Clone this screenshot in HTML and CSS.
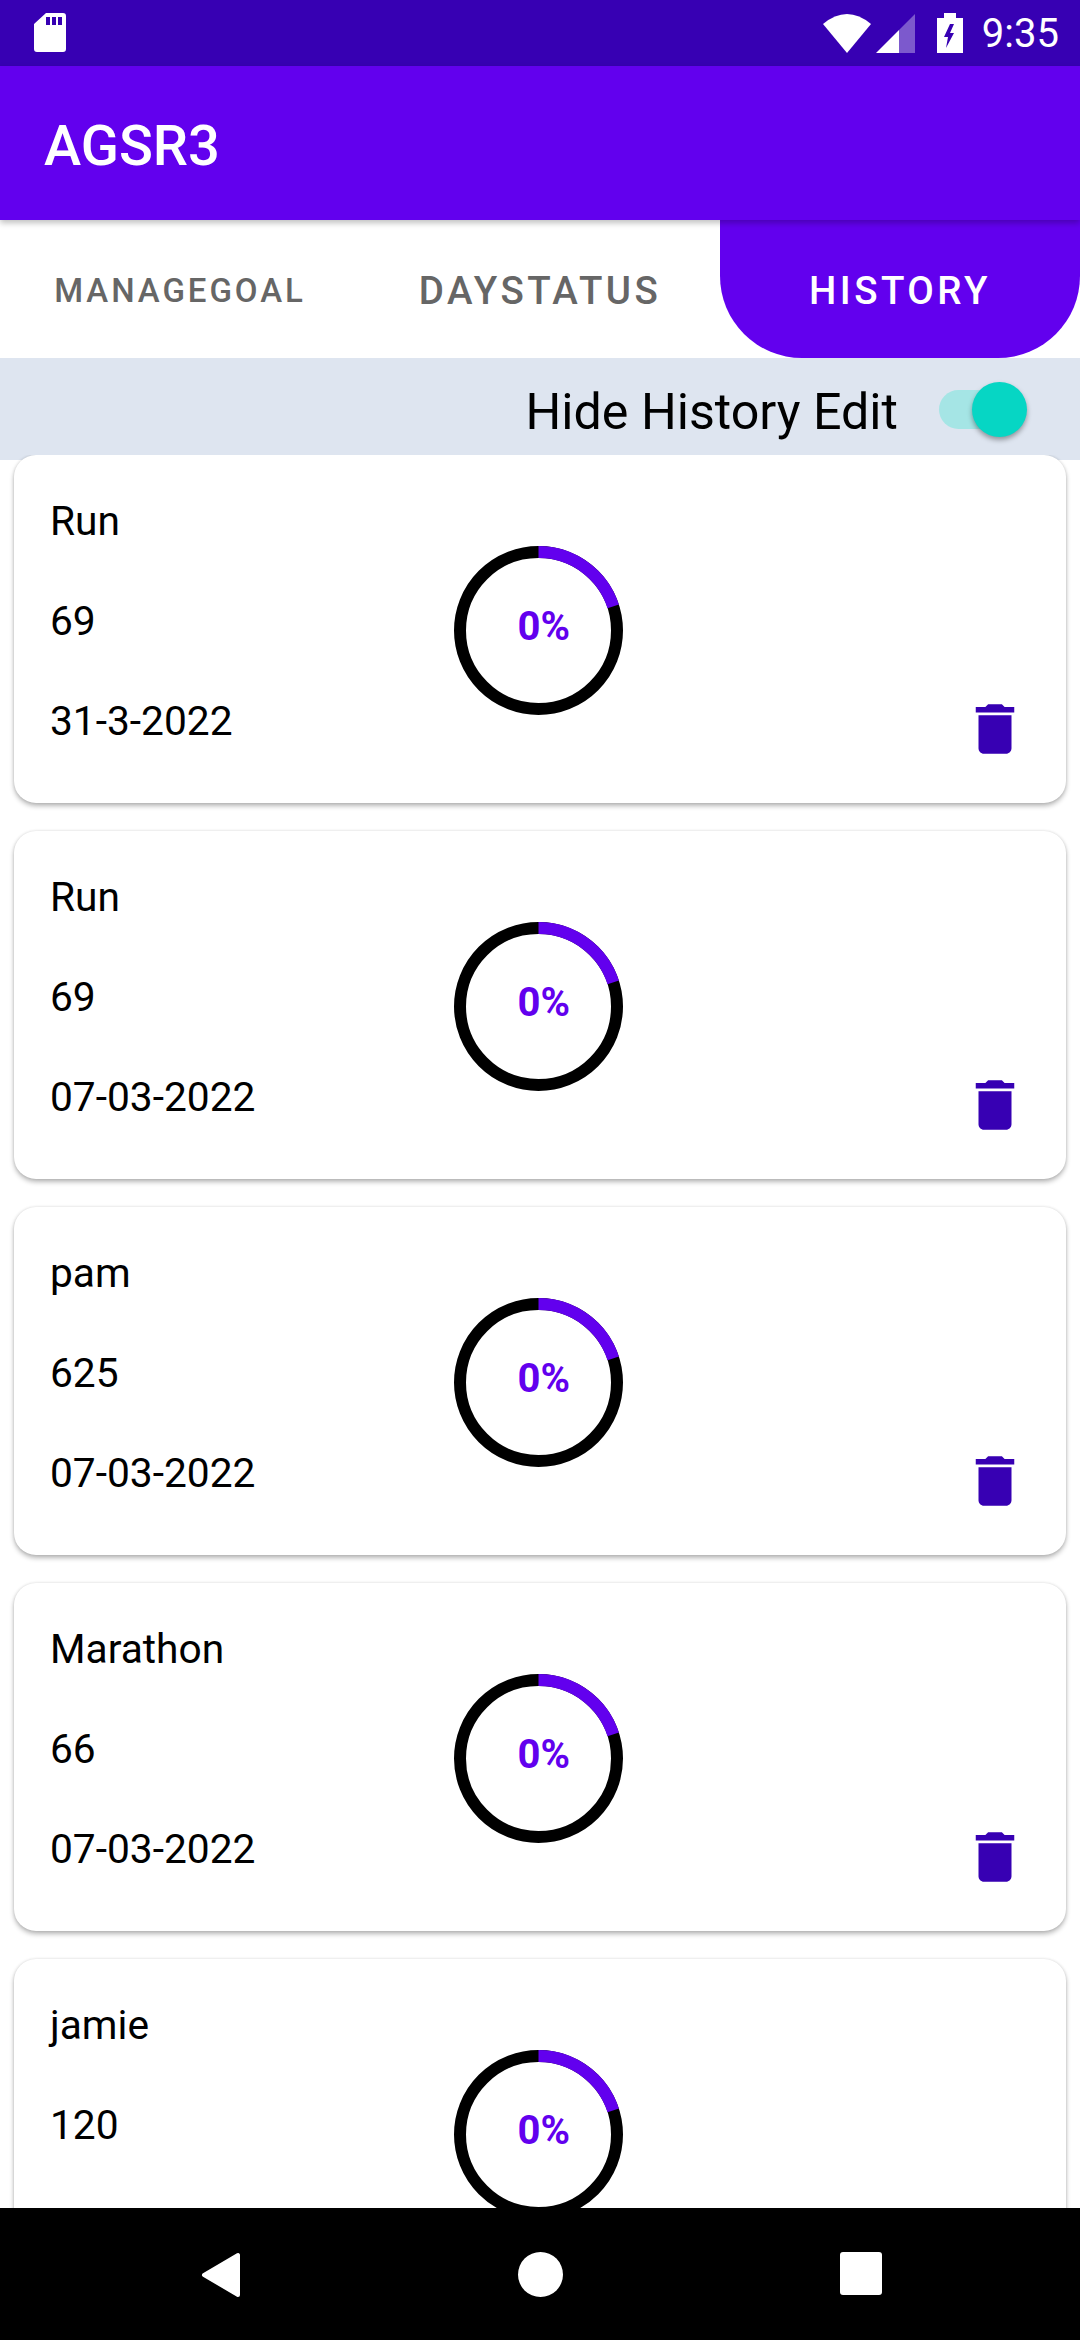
FILE: index.html
```html
<!DOCTYPE html>
<html lang="en">
<head>
  <meta charset="UTF-8" />
  <title>AGSR3</title>
  <link rel="stylesheet" href="styles.css">
</head>
<body>
  <svg class="defs" width="0" height="0">
    <symbol id="ring" viewBox="0 0 169 169">
      <circle cx="84.5" cy="84.5" r="78.5" fill="none" stroke="#000" stroke-width="12" />
      <circle cx="84.5" cy="84.5" r="78.5" fill="none" stroke="#6200ee" stroke-width="12"
        stroke-dasharray="98.6 500" transform="rotate(-90 84.5 84.5)" />
    </symbol>
    <symbol id="trash" viewBox="0 0 24 24">
      <path d="M6 19c0 1.1.9 2 2 2h8c1.1 0 2-.9 2-2V7H6v12zM19 4h-3.5l-1-1h-5l-1 1H5v2h14V4z" />
    </symbol>
  </svg>

  <div class="screen">
    <div class="status-bar">
      <svg class="sd-icon" width="32" height="39" viewBox="0 0 32 39">
        <path fill="#fff" fill-rule="evenodd" d="M12 0h17a3 3 0 0 1 3 3v33a3 3 0 0 1-3 3H3a3 3 0 0 1-3-3V11zM12 4v8h4V4zM18 4v8h4V4zM24 4v8h4V4z" />
      </svg>
      <div class="status-right">
        <svg width="48" height="39" viewBox="0 0 48 39">
          <path fill="#fff" d="M0 10Q24-10 48 10L24 39z" />
        </svg>
        <svg width="39" height="39" viewBox="0 0 39 39">
          <path fill="#fff" fill-opacity=".35" d="M39 0v39H23V16z" />
          <path fill="#fff" d="M23 16v23H0z" />
        </svg>
        <svg class="battery" width="26" height="40" viewBox="0 0 26 40">
          <path fill="#fff" d="M7 0h12v5h7v35H0V5h7z" />
          <path fill="#3700b3" d="M13 11 7 24h4l-2 11 8-15h-4l4-9z" />
        </svg>
        <span class="clock">9:35</span>
      </div>
    </div>

    <header class="app-bar">AGSR3</header>

    <nav class="tabs">
      <div class="tab tab-small">MANAGEGOAL</div>
      <div class="tab">DAYSTATUS</div>
      <div class="tab tab-active">HISTORY</div>
    </nav>

    <div class="filter-strip">
      <span class="filter-label">Hide History Edit</span>
      <div class="switch"><div class="switch-thumb"></div></div>
    </div>

    <main class="history-list">
      <div class="card">
        <div class="card-text"><div>Run</div><div>69</div><div>31-3-2022</div></div>
        <div class="ring"><svg width="169" height="169"><use href="#ring" /></svg><span class="ring-label">0%</span></div>
        <svg class="trash" width="66" height="66"><use href="#trash" /></svg>
      </div>
      <div class="card">
        <div class="card-text"><div>Run</div><div>69</div><div>07-03-2022</div></div>
        <div class="ring"><svg width="169" height="169"><use href="#ring" /></svg><span class="ring-label">0%</span></div>
        <svg class="trash" width="66" height="66"><use href="#trash" /></svg>
      </div>
      <div class="card">
        <div class="card-text"><div>pam</div><div>625</div><div>07-03-2022</div></div>
        <div class="ring"><svg width="169" height="169"><use href="#ring" /></svg><span class="ring-label">0%</span></div>
        <svg class="trash" width="66" height="66"><use href="#trash" /></svg>
      </div>
      <div class="card">
        <div class="card-text"><div>Marathon</div><div>66</div><div>07-03-2022</div></div>
        <div class="ring"><svg width="169" height="169"><use href="#ring" /></svg><span class="ring-label">0%</span></div>
        <svg class="trash" width="66" height="66"><use href="#trash" /></svg>
      </div>
      <div class="card">
        <div class="card-text"><div>jamie</div><div>120</div></div>
        <div class="ring"><svg width="169" height="169"><use href="#ring" /></svg><span class="ring-label">0%</span></div>
      </div>
    </main>

    <footer class="nav-bar">
      <svg width="40" height="46" viewBox="0 0 40 46">
        <path fill="#fff" stroke="#fff" stroke-width="4" stroke-linejoin="round" d="M37 3v40L3 23z" />
      </svg>
      <svg width="45" height="45" viewBox="0 0 45 45">
        <circle cx="22.5" cy="22.5" r="22.5" fill="#fff" />
      </svg>
      <svg width="42" height="43" viewBox="0 0 42 43">
        <rect width="42" height="43" rx="3" fill="#fff" />
      </svg>
    </footer>
  </div>
</body>
</html>
```

FILE: styles.css
```css
* {
  box-sizing: border-box;
}
html, body {
  height: 2340px;
  overflow: hidden;
}
body {
  margin: 0;
  background: #fff;
  font-family: Roboto, "Liberation Sans", sans-serif;
  color: #000;
}
.defs {
  position: absolute;
}
.screen {
  width: 1080px;
  height: 2340px;
  display: flex;
  flex-direction: column;
  overflow: hidden;
}

/* status bar */
.status-bar {
  height: 66px;
  flex: none;
  background: #3700b3;
  display: flex;
  align-items: flex-start;
  justify-content: space-between;
  padding: 13px 21px 0 34px;
}
.status-right {
  display: flex;
  align-items: flex-start;
  padding-top: 1px;
}
.status-right svg {
  margin-right: 5px;
}
.status-right .battery {
  margin: -1px 0 0 17px;
}
.clock {
  margin-left: 19px;
  font-size: 40px;
  line-height: 39px;
  color: #fff;
}

/* app bar */
.app-bar {
  position: relative;
  z-index: 2;
  height: 154px;
  flex: none;
  background: #6200ee;
  color: #fff;
  font-size: 56px;
  font-weight: 500;
  line-height: 154px;
  padding: 3px 0 0 44px;
  box-shadow: 0 3px 6px rgba(0, 0, 0, .25);
}

/* tabs */
.tabs {
  height: 138px;
  flex: none;
  display: flex;
  background: #fff;
}
.tab {
  width: 360px;
  display: flex;
  align-items: center;
  justify-content: center;
  padding-top: 2px;
  font-size: 38.5px;
  font-weight: 500;
  letter-spacing: .0892em;
  color: #666;
}
.tab-small {
  font-size: 33px;
}
.tab-active {
  background: #6200ee;
  color: #fff;
  border-radius: 0 0 82px 82px;
}

/* hide history row */
.filter-strip {
  height: 102px;
  flex: none;
  background: #dee5f0;
  display: flex;
  align-items: center;
  justify-content: flex-end;
  padding-right: 60px;
}
.filter-label {
  font-size: 50.2px;
  margin: 4px 41px 0 0;
}
.switch {
  position: relative;
  width: 81px;
  height: 39px;
  border-radius: 20px;
  background: #a5e5e5;
}
.switch-thumb {
  position: absolute;
  top: -8px;
  right: -7px;
  width: 55px;
  height: 55px;
  border-radius: 50%;
  background: #06d6c4;
  box-shadow: 0 3px 5px rgba(0, 0, 0, .35);
}

/* cards */
.history-list {
  position: relative;
  flex: 1;
  min-height: 0;
  margin-top: -5px;
  padding: 0 14px;
  display: flex;
  flex-direction: column;
  gap: 28px;
  overflow: hidden;
}
.card {
  flex: none;
  height: 348px;
  background: #fff;
  border-radius: 22px;
  box-shadow: 0 3px 5px rgba(0, 0, 0, .28), 0 0 3px rgba(0, 0, 0, .12);
  padding: 16px 40px 32px 36px;
  display: grid;
  grid-template-columns: 1fr auto 1fr;
  align-items: center;
}
.card-text {
  align-self: start;
  font-size: 40.7px;
  line-height: 100px;
}
.ring {
  position: relative;
  width: 169px;
  height: 169px;
  margin-top: 18px;
}
.ring svg {
  display: block;
}
.ring-label {
  position: absolute;
  left: 64px;
  top: 57px;
  font-size: 40px;
  line-height: 48px;
  font-weight: 700;
  color: #6200ee;
}
.trash {
  justify-self: end;
  align-self: end;
  margin: 0 -2px 9px 0;
  fill: #3700b3;
}

/* bottom nav */
.nav-bar {
  height: 132px;
  flex: none;
  background: #000;
  display: flex;
  align-items: flex-start;
  justify-content: space-between;
  padding: 44px 198px 0 201px;
}
```
